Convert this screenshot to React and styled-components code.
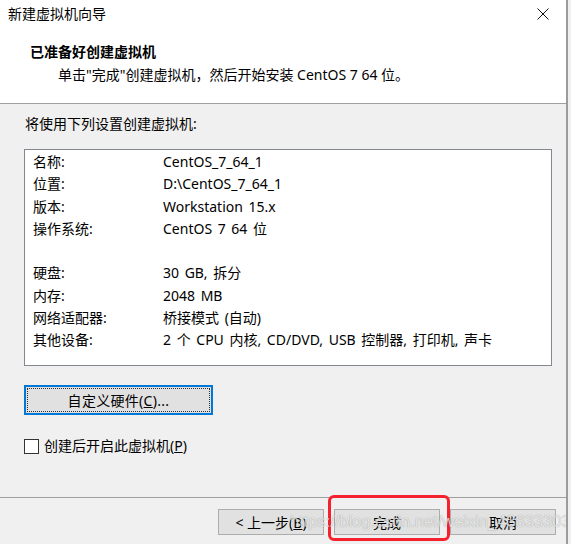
import styled, { createGlobalStyle } from "styled-components";

const GlobalStyle = createGlobalStyle`
  html, body {
    margin: 0;
    padding: 0;
    background: #f0f0f0;
  }
  body {
    font-family: "Noto Sans", "Noto Sans CJK SC", sans-serif;
    font-size: 14px;
    color: #000;
  }
`;

const rows = [
  ["名称:", "CentOS_7_64_1"],
  ["位置:", "D:\\CentOS_7_64_1"],
  ["版本:", "Workstation 15.x"],
  ["操作系统:", "CentOS 7 64 位"],
  ["", ""],
  ["硬盘:", "30 GB, 拆分"],
  ["内存:", "2048 MB"],
  ["网络适配器:", "桥接模式 (自动)"],
  ["其他设备:", "2 个 CPU 内核, CD/DVD, USB 控制器, 打印机, 声卡"],
];

const Window = styled.div`
  position: relative;
  width: 566px;
  height: 544px;
  border-right: 2px solid #9b9b9b;
  background: #f0f0f0;
  display: flex;
  flex-direction: column;
  overflow: hidden;
`;

const TitleBar = styled.div`
  height: 28px;
  background: #fff;
  display: flex;
  align-items: center;
  justify-content: space-between;
  padding-left: 8px;
`;

const Title = styled.span`
  font-size: 14px;
  line-height: 20px;
`;

const CloseButton = styled.div`
  width: 46px;
  height: 28px;
  display: flex;
  align-items: center;
  justify-content: center;
`;

const Header = styled.div`
  height: 76px;
  background: #fff;
  border-bottom: 1px solid #a0a0a0;
  padding-left: 30px;
  box-sizing: border-box;
  padding-top: 13px;
`;

const Heading = styled.div`
  font-weight: bold;
  font-size: 14px;
  line-height: 22px;
`;

const Subtitle = styled.div`
  padding-left: 28px;
  line-height: 24px;
`;

const Body = styled.div`
  padding: 9px 14px 0 24px;
  display: flex;
  flex-direction: column;
`;

const Intro = styled.div`
  line-height: 22px;
  padding-left: 1px;
`;

const ListBox = styled.div`
  margin-top: 14px;
  height: 214px;
  background: #fff;
  border: 1px solid #828790;
  padding-top: 1px;
`;

const Row = styled.div`
  display: grid;
  grid-template-columns: 130px 1fr;
  height: 22.3px;
  line-height: 22px;
  padding-left: 8px;
  white-space: nowrap;
  word-spacing: 2px;
`;

const CustomButton = styled.button`
  margin-top: 19px;
  width: 189px;
  height: 30px;
  background: #e1e1e1;
  border: 2px solid #0078d7;
  font: inherit;
  letter-spacing: 0.3px;
  padding: 0;
  display: flex;
  align-items: center;
  justify-content: center;
  position: relative;
  &::after {
    content: "";
    position: absolute;
    inset: 1px;
    border: 1px dotted #333;
  }
`;

const CheckRow = styled.label`
  margin-top: 21px;
  display: flex;
  align-items: center;
  gap: 5px;
  line-height: 20px;
`;

const Box = styled.span`
  width: 13px;
  height: 13px;
  border: 1px solid #333;
  background: #fff;
`;

const Key = styled.span`
  text-decoration: underline;
`;

const Footer = styled.div`
  margin-top: auto;
  height: 47px;
  border-top: 1px solid #a0a0a0;
  display: flex;
  justify-content: flex-end;
  gap: 10px;
  padding: 11px 10px 0 0;
  box-sizing: border-box;
`;

const NavButton = styled.button`
  width: 106px;
  height: 26px;
  background: #e1e1e1;
  border: 1px solid #adadad;
  font: inherit;
  padding: 0;
  color: #000;
`;

const Highlight = styled.div`
  position: absolute;
  left: 328px;
  top: 495px;
  width: 116px;
  height: 40px;
  border: 3px solid #f5222d;
  border-radius: 6px;
  pointer-events: none;
`;

const Watermark = styled.div`
  position: absolute;
  left: 290px;
  top: 512px;
  font-family: "Liberation Sans", Arial, sans-serif;
  font-size: 16.5px;
  color: rgba(255, 255, 255, 0.75);
  text-shadow: 0 0 1px rgba(0, 0, 0, 0.4);
  white-space: nowrap;
  pointer-events: none;
`;

export default function App() {
  return (
    <>
      <GlobalStyle />
      <Window>
        <TitleBar>
          <Title>新建虚拟机向导</Title>
          <CloseButton>
            <svg width="12" height="12" viewBox="0 0 12 12">
              <path d="M0.5 0.5 L11.5 11.5 M11.5 0.5 L0.5 11.5" stroke="#111" strokeWidth="1" />
            </svg>
          </CloseButton>
        </TitleBar>
        <Header>
          <Heading>已准备好创建虚拟机</Heading>
          <Subtitle>单击"完成"创建虚拟机，然后开始安装 CentOS 7 64 位。</Subtitle>
        </Header>
        <Body>
          <Intro>将使用下列设置创建虚拟机:</Intro>
          <ListBox>
            {rows.map(([k, v], i) => (
              <Row key={i}>
                <span>{k}</span>
                <span>{v}</span>
              </Row>
            ))}
          </ListBox>
          <CustomButton>
            自定义硬件(<Key>C</Key>)...
          </CustomButton>
          <CheckRow>
            <Box />
            <span>
              创建后开启此虚拟机(<Key>P</Key>)
            </span>
          </CheckRow>
        </Body>
        <Footer>
          <NavButton>
            &lt; 上一步(<Key>B</Key>)
          </NavButton>
          <NavButton>完成</NavButton>
          <NavButton>取消</NavButton>
        </Footer>
        <Highlight />
        <Watermark>https://blog.csdn.net/weixin_43833303</Watermark>
      </Window>
    </>
  );
}
